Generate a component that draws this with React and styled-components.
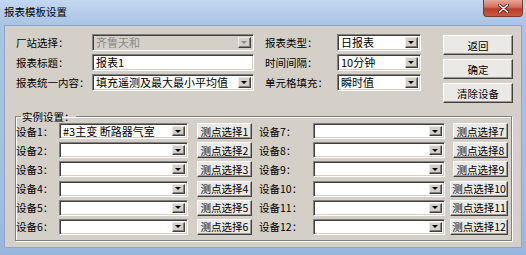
import React from 'react'
import styled, { createGlobalStyle } from 'styled-components'

const GlobalStyle = createGlobalStyle`
  html, body {
    margin: 0;
    padding: 0;
    background: #fff;
  }
  body {
    font-family: "Noto Sans CJK SC", "Liberation Sans", sans-serif;
    font-size: 10.5px;
    color: #000;
  }
`

const Window = styled.div`
  width: 526px;
  height: 255px;
  box-sizing: border-box;
  padding: 0 4px 7px 4px;
  display: flex;
  flex-direction: column;
  background: linear-gradient(#c2d7f0, #aac4e5 24px, #a2bde1 80%, #98b5dc);
`

const TitleBar = styled.div`
  height: 25px;
  display: flex;
  align-items: flex-start;
  justify-content: space-between;
`

const Title = styled.div`
  padding-top: 5px;
  line-height: 14px;
  font-size: 10.5px;
`

const CloseButton = styled.div`
  width: 40px;
  height: 17px;
  margin-right: -1px;
  box-sizing: border-box;
  border: 1px solid #7a3a30;
  border-top: none;
  border-radius: 0 0 4px 4px;
  background: linear-gradient(#e8a796, #d0705d 45%, #bb3d2b 55%, #c65a40);
  display: flex;
  align-items: center;
  justify-content: center;
`

const Client = styled.div`
  flex: 1;
  box-sizing: border-box;
  background: #d4d0c8;
  border: 1px solid #8ea5c3;
  display: flex;
  flex-direction: column;
`

const TopSection = styled.div`
  display: flex;
  padding: 8px 0 0 11px;
`

const FieldGrid = styled.div`
  display: grid;
  grid-template-columns: ${p => p.$label}px ${p => p.$control}px;
  grid-auto-rows: 17px;
  row-gap: 3px;
  margin-right: ${p => p.$after}px;
`

const Label = styled.div`
  display: flex;
  align-items: center;
  white-space: nowrap;
  font-size: 10.5px;
  line-height: 13px;
  width: ${p => (p.$width ? `${p.$width}px` : 'auto')};
  flex-shrink: 0;
`

const Sunken = styled.div`
  box-sizing: border-box;
  height: ${p => p.$height || 17}px;
  width: ${p => (p.$width ? `${p.$width}px` : 'auto')};
  flex-shrink: 0;
  border-top: 1px solid #808080;
  border-left: 1px solid #808080;
  border-right: 1px solid #fff;
  border-bottom: 1px solid #fff;
  box-shadow: inset 1px 1px #404040, inset -1px -1px #d4d0c8;
  background: ${p => (p.$disabled ? '#d4d0c8' : '#fff')};
  display: flex;
  align-items: stretch;
  padding: 2px;
`

const FieldText = styled.div`
  flex: 1;
  display: flex;
  align-items: center;
  padding-left: 1px;
  font-size: 11px;
  line-height: 13px;
  white-space: nowrap;
  color: ${p => (p.$disabled ? '#8a8a8a' : '#000')};
`

const ArrowBox = styled.div`
  width: 13px;
  box-sizing: border-box;
  background: #d4d0c8;
  border-top: 1px solid #ece9e4;
  border-left: 1px solid #ece9e4;
  border-right: 1px solid #404040;
  border-bottom: 1px solid #404040;
  box-shadow: inset -1px -1px #808080;
  display: flex;
  align-items: center;
  justify-content: center;
`

const Arrow = styled.div`
  width: 0;
  height: 0;
  border-left: 3px solid transparent;
  border-right: 3px solid transparent;
  border-top: 3px solid ${p => (p.$disabled ? '#8a8a8a' : '#000')};
  margin-right: 1px;
`

const ButtonColumn = styled.div`
  display: flex;
  flex-direction: column;
  gap: 4px;
  padding-top: 1px;
`

const Button = styled.div`
  box-sizing: border-box;
  width: ${p => p.$width}px;
  height: ${p => p.$height}px;
  margin-left: ${p => p.$offset || 0}px;
  flex-shrink: 0;
  background: #ebe9e5;
  border-top: 1px solid #fff;
  border-left: 1px solid #fff;
  border-right: 1px solid #404040;
  border-bottom: 1px solid #404040;
  box-shadow: inset -1px -1px #9a9894;
  display: flex;
  align-items: center;
  justify-content: center;
  font-size: ${p => p.$size || 10.5}px;
  line-height: 13px;
  white-space: nowrap;
`

const Group = styled.fieldset`
  margin: 7px 0 0 10px;
  width: 497px;
  box-sizing: border-box;
  padding: 0 2px 5px 0;
  border: 1px solid #808080;
  box-shadow: inset 1px 1px #fff, 1px 1px #fff;
`

const Legend = styled.legend`
  margin-left: 5px;
  padding: 0 1px;
  height: 13px;
  line-height: 13px;
  font-size: 10.5px;
`

const DeviceGrid = styled.div`
  display: grid;
  grid-template-columns: 236px 249px;
  grid-template-rows: repeat(6, 16px);
  grid-auto-flow: column;
  column-gap: 7px;
  row-gap: 3.2px;
`

const DeviceRow = styled.div`
  display: flex;
  align-items: stretch;
`

function Combo({ width, height, value, disabled }) {
  return (
    <Sunken $width={width} $height={height} $disabled={disabled}>
      <FieldText $disabled={disabled}>{value}</FieldText>
      <ArrowBox>
        <Arrow $disabled={disabled} />
      </ArrowBox>
    </Sunken>
  )
}

const devices = [
  { n: 1, value: '#3主变 断路器气室' },
  { n: 2 }, { n: 3 }, { n: 4 }, { n: 5 }, { n: 6 },
  { n: 7 }, { n: 8 }, { n: 9 }, { n: 10 }, { n: 11 }, { n: 12 },
]

export default function App() {
  return (
    <>
      <GlobalStyle />
      <Window>
        <TitleBar>
          <Title>报表模板设置</Title>
          <CloseButton>
            <svg width="11" height="9" viewBox="0 0 11 9">
              <path d="M1.5 1 L9.5 8 M9.5 1 L1.5 8" stroke="#4a1a14" strokeWidth="3" strokeLinecap="round" />
              <path d="M1.5 1 L9.5 8 M9.5 1 L1.5 8" stroke="#fff" strokeWidth="1.6" strokeLinecap="round" />
            </svg>
          </CloseButton>
        </TitleBar>
        <Client>
          <TopSection>
            <FieldGrid $label={76} $control={162} $after={11}>
              <Label>厂站选择：</Label>
              <Combo value="齐鲁天和" disabled />
              <Label>报表标题：</Label>
              <Sunken>
                <FieldText>报表1</FieldText>
              </Sunken>
              <Label>报表统一内容：</Label>
              <Combo value="填充遥测及最大最小平均值" />
            </FieldGrid>
            <FieldGrid $label={72} $control={84} $after={22}>
              <Label>报表类型：</Label>
              <Combo value="日报表" />
              <Label>时间间隔：</Label>
              <Combo value="10分钟" />
              <Label>单元格填充：</Label>
              <Combo value="瞬时值" />
            </FieldGrid>
            <ButtonColumn>
              <Button $width={70} $height={20}>返回</Button>
              <Button $width={70} $height={20}>确定</Button>
              <Button $width={70} $height={20}>清除设备</Button>
            </ButtonColumn>
          </TopSection>
          <Group>
            <Legend>实例设置：</Legend>
            <DeviceGrid>
              {devices.map(d => {
                const right = d.n > 6
                const wide = d.n > 9
                return (
                  <DeviceRow key={d.n}>
                    <Label $width={right ? 54 : 43}>设备{d.n}：</Label>
                    <Combo width={right ? 132 : 129} height={16} value={d.value} />
                    <Button
                      $width={wide ? 58 : 55}
                      $height={16}
                      $offset={right ? (wide ? 5 : 8) : 9}
                      $size={10.5}
                    >
                      测点选择{d.n}
                    </Button>
                  </DeviceRow>
                )
              })}
            </DeviceGrid>
          </Group>
        </Client>
      </Window>
    </>
  )
}
